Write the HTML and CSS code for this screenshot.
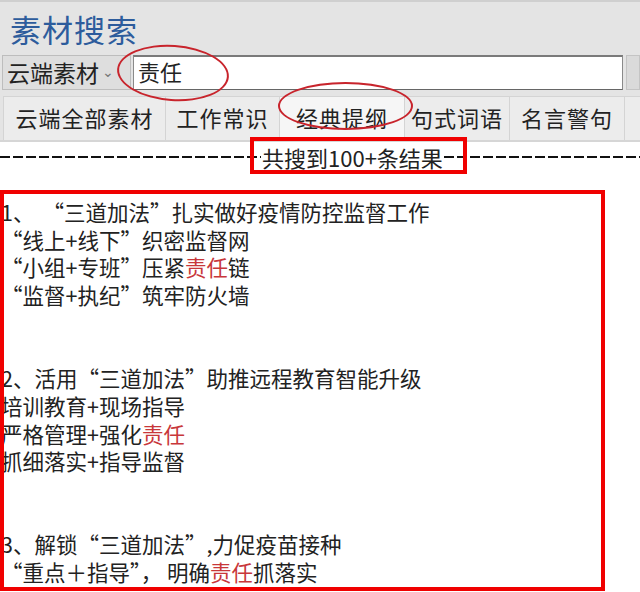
FILE: index.html
```html
<!DOCTYPE html>
<html lang="zh-CN">
<head>
<meta charset="utf-8">
<title>素材搜索</title>
<link rel="stylesheet" href="styles.css">
</head>
<body>
<div class="app">
  <header class="top">
    <h1 class="title">素材搜索</h1>
    <div class="search-row">
      <div class="source">云端素材<span class="chev">⌄</span></div>
      <div class="input">责任</div>
      <div class="btn"></div>
    </div>
    <nav class="tabs">
      <div class="tab">云端全部素材</div>
      <div class="tab">工作常识</div>
      <div class="tab active">经典提纲</div>
      <div class="tab">句式词语</div>
      <div class="tab">名言警句</div>
      <div class="tab empty"></div>
    </nav>
  </header>
  <div class="summary">
    <span class="dash lead"></span>
    <span class="count">共搜到100+条结果</span>
    <span class="dash"></span>
  </div>
  <div class="results">
    <p class="line">1、<span class="sp"></span>“三道加法”扎实做好疫情防控监督工作</p>
    <p class="line">“线上+线下”织密监督网</p>
    <p class="line">“小组+专班”压紧<em class="hl">责任</em>链</p>
    <p class="line">“监督+执纪”筑牢防火墙</p>
    <p class="line blank"></p>
    <p class="line blank"></p>
    <p class="line">2、活用“三道加法”助推远程教育智能升级</p>
    <p class="line">培训教育+现场指导</p>
    <p class="line">严格管理+强化<em class="hl">责任</em></p>
    <p class="line">抓细落实+指导监督</p>
    <p class="line blank"></p>
    <p class="line blank"></p>
    <p class="line">3、解锁“三道加法”,力促疫苗接种</p>
    <p class="line">“重点＋指导”， 明确<em class="hl">责任</em>抓落实</p>
  </div>
  <div class="mark ellipse e1"></div>
  <div class="mark ellipse e2"></div>
  <div class="mark box b1"></div>
  <div class="mark box b2"></div>
</div>
</body>
</html>
```

FILE: styles.css
```css
* { box-sizing: border-box; }
html, body { margin: 0; padding: 0; }
body {
  width: 640px;
  height: 592px;
  overflow: hidden;
  background: #fff;
  font-family: "Noto Sans CJK SC", "Noto Sans", sans-serif;
  color: #222;
}
.app { position: relative; width: 640px; height: 592px; overflow: hidden; }

.top {
  background: #e4e4e4;
  border-top: 2px solid #cfcfcf;
  border-bottom: 2px solid #d6d6d6;
  display: flex;
  flex-direction: column;
}
.title {
  margin: 0;
  height: 53px;
  padding: 7px 0 0 10px;
  font-size: 31px;
  line-height: 40px;
  font-weight: 400;
  color: #2d5c9c;
  letter-spacing: 1px;
}
.search-row {
  display: flex;
  align-items: stretch;
  height: 35px;
  padding-left: 2px;
}
.source {
  width: 129px;
  background: #dedede;
  border: 1px solid #bdbdbd;
  display: flex;
  align-items: center;
  padding-left: 4px;
  font-size: 23px;
  line-height: 1;
  color: #222;
}
.chev { font-size: 14px; color: #777; margin-left: 3px; margin-top: -4px; }
.input {
  width: 490px;
  margin-left: 2px;
  background: #fff;
  border: 1px solid #8a8a8a;
  border-top: 2px solid #7a7a7a;
  border-bottom-color: #666;
  padding-left: 4px;
  font-size: 22px;
  line-height: 29px;
  color: #222;
}
.btn {
  flex: 1;
  margin-left: 3px;
  background: #dadada;
  border: 1px solid #c4c4c4;
}
.tabs {
  display: flex;
  margin-top: 6px;
  height: 44px;
  padding-left: 3px;
}
.tab {
  display: flex;
  align-items: center;
  justify-content: center;
  font-size: 22px;
  color: #222;
  background: #ececec;
  border-left: 1px solid #d4d4d4;
  border-top: 1px solid #d4d4d4;
  letter-spacing: 1px;
  padding-bottom: 3px;
}
.tab:nth-child(1) { width: 162px; }
.tab:nth-child(2) { width: 114px; }
.tab:nth-child(3) { width: 125px; }
.tab:nth-child(4) { width: 105px; }
.tab:nth-child(5) { width: 115px; }
.tab.empty { flex: 1; }
.tab.active { background: #f6f6f6; }

.summary {
  display: flex;
  align-items: center;
  height: 30px;
}
.dash {
  flex: 1;
  height: 2px;
  background: repeating-linear-gradient(90deg, #111 0 10px, transparent 10px 13px);
}
.dash.lead { flex: 0 0 261px; }
.count {
  font-size: 22px;
  line-height: 30px;
  color: #222;
  padding: 0 1px;
}

.results {
  padding: 26px 0 0 1px;
}
.line {
  margin: 0;
  height: 27.7px;
  font-size: 21.5px;
  line-height: 27.7px;
  white-space: nowrap;
  color: #222;
}
.sp { display: inline-block; width: 8px; }
.hl { font-style: normal; color: #c8373a; }

.mark { position: absolute; pointer-events: none; }
.ellipse { border: 2px solid #c8242c; border-radius: 50%; }
.e1 { left: 117px; top: 45px; width: 112px; height: 56px; transform: rotate(4deg); }
.e2 { left: 278px; top: 82px; width: 135px; height: 48px; }
.box { border: 4px solid #f00000; }
.b1 { left: 250px; top: 137px; width: 217px; height: 37px; }
.b2 { left: 0; top: 190px; width: 605px; height: 401px; }
```
